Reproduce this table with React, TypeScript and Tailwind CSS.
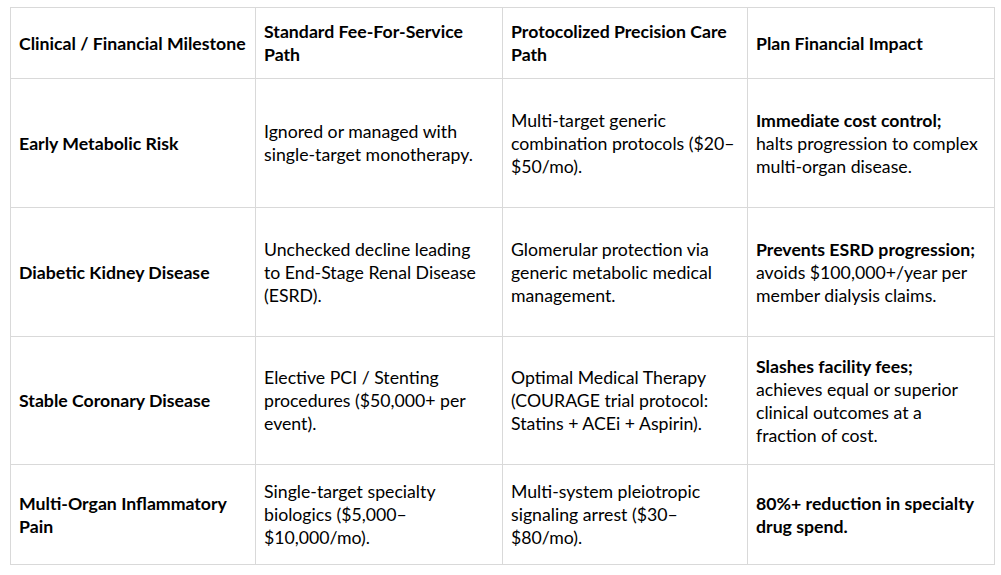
type Cell = { bold?: string[]; lines: string[] }

const header: string[][] = [
  ['Clinical / Financial Milestone'],
  ['Standard Fee-For-Service', 'Path'],
  ['Protocolized Precision Care', 'Path'],
  ['Plan Financial Impact'],
]

const rows: { height: string; milestone: string[]; cells: Cell[] }[] = [
  {
    height: 'h-[129px]',
    milestone: ['Early Metabolic Risk'],
    cells: [
      { lines: ['Ignored or managed with', 'single-target monotherapy.'] },
      { lines: ['Multi-target generic', 'combination protocols ($20–', '$50/mo).'] },
      { bold: ['Immediate cost control;'], lines: ['halts progression to complex', 'multi-organ disease.'] },
    ],
  },
  {
    height: 'h-[129px]',
    milestone: ['Diabetic Kidney Disease'],
    cells: [
      { lines: ['Unchecked decline leading', 'to End-Stage Renal Disease', '(ESRD).'] },
      { lines: ['Glomerular protection via', 'generic metabolic medical', 'management.'] },
      { bold: ['Prevents ESRD progression;'], lines: ['avoids $100,000+/year per', 'member dialysis claims.'] },
    ],
  },
  {
    height: 'h-[128px]',
    milestone: ['Stable Coronary Disease'],
    cells: [
      { lines: ['Elective PCI / Stenting', 'procedures ($50,000+ per', 'event).'] },
      { lines: ['Optimal Medical Therapy', '(COURAGE trial protocol:', 'Statins + ACEi + Aspirin).'] },
      {
        bold: ['Slashes facility fees;'],
        lines: ['achieves equal or superior', 'clinical outcomes at a', 'fraction of cost.'],
      },
    ],
  },
  {
    height: 'h-[100px]',
    milestone: ['Multi-Organ Inflammatory', 'Pain'],
    cells: [
      { lines: ['Single-target specialty', 'biologics ($5,000–', '$10,000/mo).'] },
      { lines: ['Multi-system pleiotropic', 'signaling arrest ($30–', '$80/mo).'] },
      { bold: ['80%+ reduction in specialty', 'drug spend.'], lines: [] },
    ],
  },
]

const cellClass = 'border border-[#d9d9d9] pl-2 pr-1 align-middle'

function Lines({ items, bold }: { items: string[]; bold?: boolean }) {
  return (
    <>
      {items.map((t) => (
        <span key={t} className={`block whitespace-nowrap ${bold ? 'font-bold' : ''}`}>
          {t}
        </span>
      ))}
    </>
  )
}

export default function App() {
  return (
    <div className="min-h-[575px] w-[1001px] bg-white pl-[10px] pt-[7px] font-['Lato','Liberation_Sans',sans-serif] text-[17.7px] leading-[23px] text-black">
      <table className="w-[984px] table-fixed border-collapse">
        <colgroup>
          <col className="w-[245px]" />
          <col className="w-[247px]" />
          <col className="w-[245px]" />
          <col className="w-[247px]" />
        </colgroup>
        <thead>
          <tr className="h-[71px]">
            {header.map((h) => (
              <th key={h[0]} className={`${cellClass} text-left font-bold`}>
                <Lines items={h} />
              </th>
            ))}
          </tr>
        </thead>
        <tbody>
          {rows.map((r) => (
            <tr key={r.milestone[0]} className={r.height}>
              <td className={cellClass}>
                <Lines items={r.milestone} bold />
              </td>
              {r.cells.map((c, i) => (
                <td key={i} className={cellClass}>
                  {c.bold && <Lines items={c.bold} bold />}
                  <Lines items={c.lines} />
                </td>
              ))}
            </tr>
          ))}
        </tbody>
      </table>
    </div>
  )
}
